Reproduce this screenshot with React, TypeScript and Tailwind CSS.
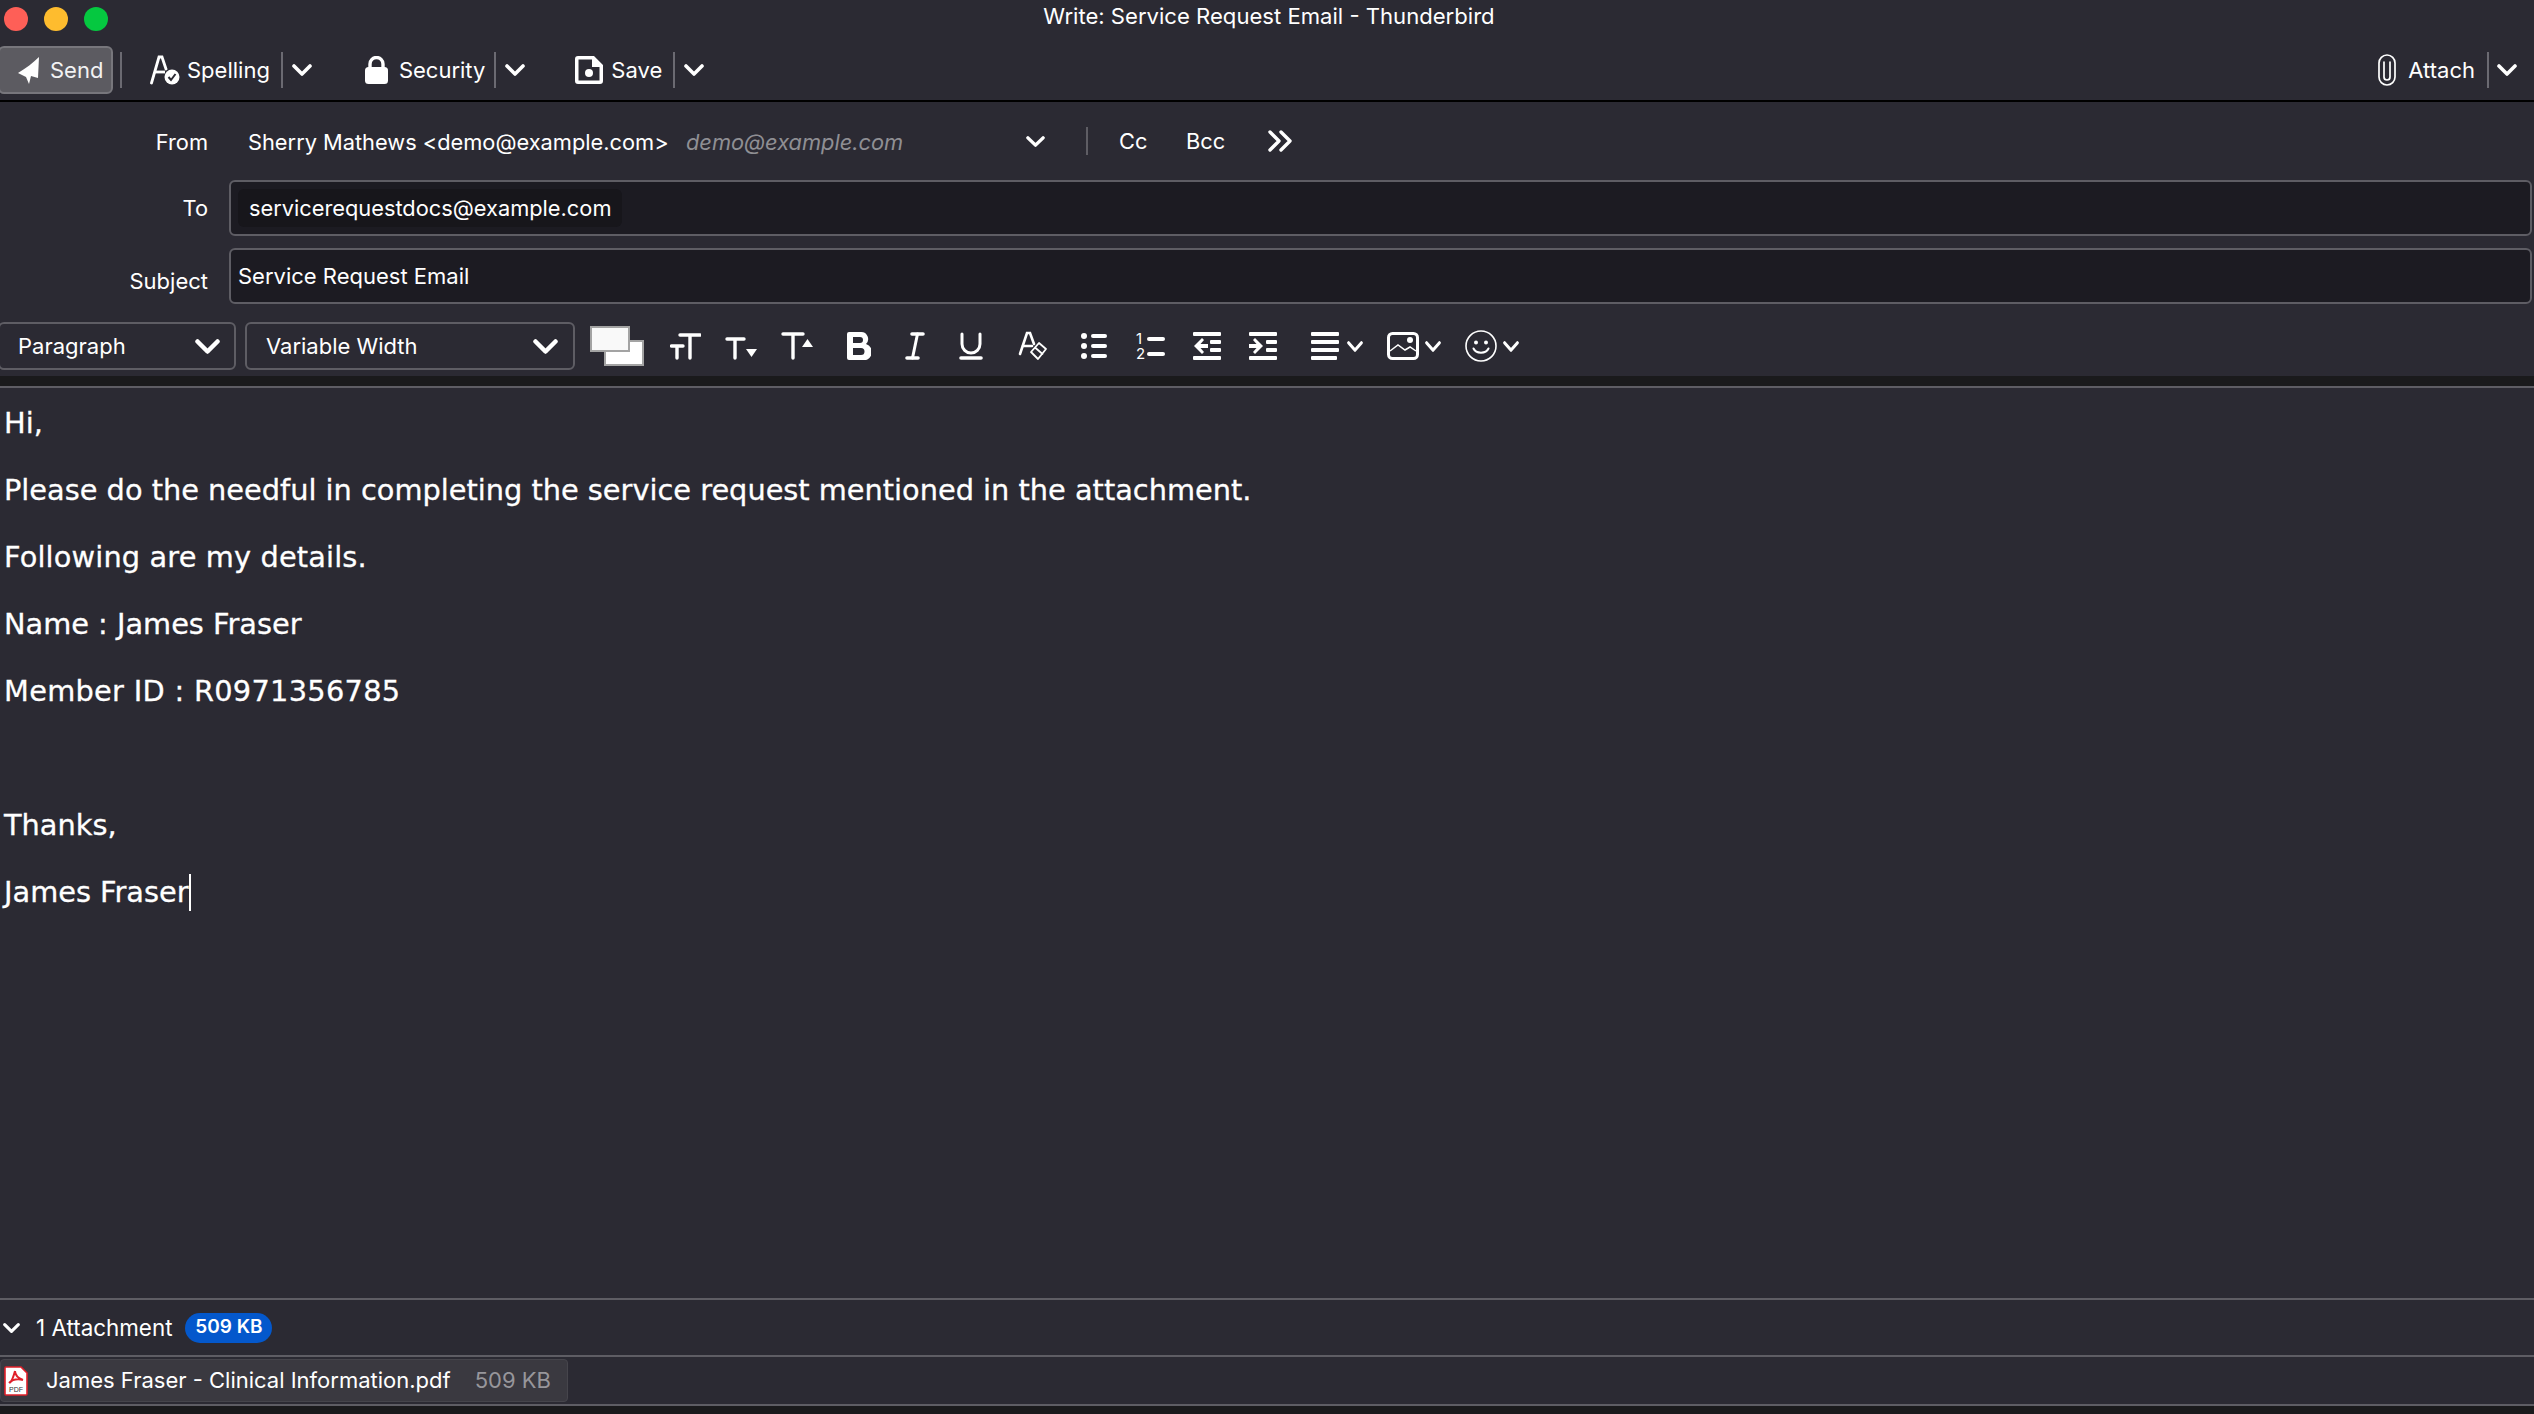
const ui = "font-['Inter','Liberation_Sans',sans-serif]";

function Chevron({ className = "w-[20px] h-[12px]" }: { className?: string }) {
  return (
    <svg viewBox="0 0 20 12" preserveAspectRatio="none" className={`${className} shrink-0`} fill="none" stroke="white" strokeWidth="3.6" strokeLinecap="round" strokeLinejoin="round">
      <path d="M2 2 L10 10 L18 2" />
    </svg>
  );
}

function Sep() {
  return <div className="w-[2px] h-9 bg-[#6b6a72] shrink-0" />;
}

function SendIcon() {
  return (
    <svg viewBox="0 0 22 27" className="w-[22px] h-[27px] shrink-0" fill="white">
      <path d="M21 0 L20 21 L13 19 L11 27 L8 20 L0 16 C8 11 15 6 21 0 Z" />
    </svg>
  );
}

function SpellIcon() {
  return (
    <svg viewBox="0 0 30 30" className="w-[30px] h-[30px] shrink-0" fill="none" stroke="white" strokeWidth="2.8">
      <path d="M1.5 28 L9 2 L12 2 L16 14" strokeLinecap="round" />
      <path d="M5 17 H15" />
      <circle cx="22" cy="22" r="7.5" fill="white" stroke="none" />
      <path d="M18.5 22 L21 25 L25.5 19" stroke="#2b2a33" strokeWidth="2" />
    </svg>
  );
}

function LockIcon() {
  return (
    <svg viewBox="0 0 23 28" className="w-[23px] h-[28px] shrink-0">
      <path d="M5 13 V8 a6.5 6.5 0 0 1 13 0 V13" fill="none" stroke="white" strokeWidth="3.4" />
      <rect x="0" y="11" width="23" height="17" rx="3.5" fill="white" />
    </svg>
  );
}

function SaveIcon() {
  return (
    <svg viewBox="0 0 28 28" className="w-[28px] h-[28px] shrink-0">
      <path fillRule="evenodd" fill="white" d="M3 0 H19 L28 9 V25 A3 3 0 0 1 25 28 H3 A3 3 0 0 1 0 25 V3 A3 3 0 0 1 3 0 Z M3.5 3.5 V24.5 H24.5 V11 H17 V3.5 Z" />
      <circle cx="14" cy="17" r="4" fill="white" />
    </svg>
  );
}

function ClipIcon() {
  return (
    <svg viewBox="0 0 18 32" className="w-[18px] h-[32px] shrink-0" fill="none" stroke="white" strokeWidth="1.7" strokeLinecap="round">
      <path d="M6 8 V23 a3 3 0 0 0 6 0 V8" />
      <rect x="1" y="1" width="16" height="30" rx="8" />
    </svg>
  );
}

function FontSmallerBig() {
  return (
    <svg viewBox="0 0 31 28" className="w-[31px] h-[28px] shrink-0" fill="none" stroke="white" strokeWidth="3.4" strokeLinecap="round">
      <path d="M10 3 H30 M20 3 V26 M1.5 14 H13 M7 14 V26" />
    </svg>
  );
}

function FontSmaller() {
  return (
    <svg viewBox="0 0 32 28" className="w-[32px] h-[28px] shrink-0" fill="none" stroke="white" strokeWidth="3.4" strokeLinecap="round">
      <path d="M2 7 H19 M10 7 V26" />
      <path d="M21 17 H32 L26.5 25 Z" fill="white" stroke="none" />
    </svg>
  );
}

function FontLarger() {
  return (
    <svg viewBox="0 0 32 28" className="w-[32px] h-[28px] shrink-0" fill="none" stroke="white" strokeWidth="3.4" strokeLinecap="round">
      <path d="M2 2 H22 M12 2 V26" />
      <path d="M21 15 H32 L26.5 7 Z" fill="white" stroke="none" />
    </svg>
  );
}

function BoldIcon() {
  return (
    <svg viewBox="0 0 24 28" className="w-[24px] h-[28px] shrink-0" fill="white">
      <path fillRule="evenodd" d="M0 2 a2 2 0 0 1 2 -2 H14 a7 7 0 0 1 5 12 a8 8 0 0 1 -5 16 H2 a2 2 0 0 1 -2 -2 Z M6 5 V11 H13 a3 3 0 0 0 0 -6 Z M6 16 V23 H14 a3.5 3.5 0 0 0 0 -7 Z" />
    </svg>
  );
}

function ItalicIcon() {
  return (
    <svg viewBox="0 0 20 28" className="w-[20px] h-[28px] shrink-0" fill="none" stroke="white" strokeLinecap="round">
      <path d="M7 2 H18 M2 26 H13" strokeWidth="3.6" />
      <path d="M12.5 2 L7.5 26" strokeWidth="3" />
    </svg>
  );
}

function UnderlineIcon() {
  return (
    <svg viewBox="0 0 24 28" className="w-[24px] h-[28px] shrink-0" fill="none" stroke="white" strokeLinecap="round">
      <path d="M3 2 V12 A9 9 0 0 0 21 12 V2" strokeWidth="3" />
      <path d="M2 26 H22" strokeWidth="3.6" />
    </svg>
  );
}

function RemoveStyle() {
  return (
    <svg viewBox="0 0 30 30" className="w-[30px] h-[30px] shrink-0" fill="none" stroke="white" strokeWidth="2.6" strokeLinecap="round">
      <path d="M2 23 L9 2 L12 2 L16 13" />
      <path d="M5 15 H14" />
      <path d="M13 21 L21 12 L28 18 L20 28 Z M17 16.5 L24.5 23" strokeLinejoin="round" strokeWidth="1.8" />
    </svg>
  );
}

function BulletList() {
  return (
    <svg viewBox="0 0 26 26" className="w-[26px] h-[26px] shrink-0" fill="white">
      <circle cx="3" cy="3" r="3" />
      <circle cx="3" cy="13" r="3" />
      <circle cx="3" cy="23" r="3" />
      <rect x="10" y="1" width="16" height="4" rx="2" />
      <rect x="10" y="11" width="16" height="4" rx="2" />
      <rect x="10" y="21" width="16" height="4" rx="2" />
    </svg>
  );
}

function NumberList() {
  return (
    <div className="w-[29px] h-[28px] shrink-0 flex flex-col gap-[1px] text-[15px] leading-[14px]">
      <div className="h-[14px] flex items-center justify-between">
        <span>1</span>
        <div className="w-[18px] h-[4px] rounded-full bg-white" />
      </div>
      <div className="h-[14px] flex items-center justify-between">
        <span>2</span>
        <div className="w-[18px] h-[4px] rounded-full bg-white" />
      </div>
    </div>
  );
}

function Outdent() {
  return (
    <svg viewBox="0 0 28 28" className="w-[28px] h-[28px] shrink-0" fill="white">
      <rect x="0" y="0" width="28" height="4" rx="1" />
      <rect x="17" y="8" width="11" height="4" rx="1" />
      <rect x="17" y="16" width="11" height="4" rx="1" />
      <rect x="0" y="24" width="28" height="4" rx="1" />
      <path d="M9 6 L1 14 L9 22 L11 20 L7.5 16 H15 V12 H7.5 L11 8 Z" />
    </svg>
  );
}

function Indent() {
  return (
    <svg viewBox="0 0 28 28" className="w-[28px] h-[28px] shrink-0" fill="white">
      <rect x="0" y="0" width="28" height="4" rx="1" />
      <rect x="17" y="8" width="11" height="4" rx="1" />
      <rect x="17" y="16" width="11" height="4" rx="1" />
      <rect x="0" y="24" width="28" height="4" rx="1" />
      <path d="M6 6 L14 14 L6 22 L4 20 L7.5 16 H0 V12 H7.5 L4 8 Z" />
    </svg>
  );
}

function AlignIcon() {
  return (
    <svg viewBox="0 0 28 28" className="w-[28px] h-[28px] shrink-0" fill="white">
      <rect x="0" y="0" width="28" height="4" rx="1" />
      <rect x="0" y="8" width="28" height="4" rx="1" />
      <rect x="0" y="16" width="28" height="4" rx="1" />
      <rect x="0" y="24" width="26" height="4" rx="1" />
    </svg>
  );
}

function ImageIcon() {
  return (
    <svg viewBox="0 0 32 28" className="w-[32px] h-[28px] shrink-0" fill="none" stroke="white">
      <rect x="1.5" y="1.5" width="29" height="25" rx="4" strokeWidth="3" />
      <path d="M3 19 L11 13 L18 18 L23 15 L29 19" strokeWidth="1.5" />
      <circle cx="23" cy="8" r="3" fill="white" stroke="none" />
    </svg>
  );
}

function SmileIcon() {
  return (
    <svg viewBox="0 0 32 32" className="w-[32px] h-[32px] shrink-0" fill="none" stroke="white" strokeWidth="1.6" strokeLinecap="round">
      <circle cx="16" cy="16" r="15" />
      <circle cx="11" cy="12.5" r="2" fill="white" stroke="none" />
      <circle cx="21" cy="12.5" r="2" fill="white" stroke="none" />
      <path d="M8.5 18.5 C11 24 21 24 23.5 18.5" strokeWidth="2" />
    </svg>
  );
}

function PdfIcon() {
  return (
    <svg viewBox="0 0 24 30" className="w-[24px] h-[30px] shrink-0">
      <path d="M2 1 H17 L23 7 V28 A1 1 0 0 1 22 29 H2 A1 1 0 0 1 1 28 V2 A1 1 0 0 1 2 1 Z" fill="white" stroke="#e0202a" strokeWidth="1.6" />
      <path d="M11 5 C10 9 9 13 6 17 M11 5 C11 9 14 12 19 14 M5 17 C9 13 15 13 19 14" fill="none" stroke="#e0202a" strokeWidth="2" />
      <text x="12" y="26" textAnchor="middle" fontSize="7" fill="#333" fontFamily="Liberation Sans">PDF</text>
    </svg>
  );
}

const bodyLines = [
  { text: "Hi,", className: "" },
  { text: "Please do the needful in completing the service request mentioned in the attachment.", className: "" },
  { text: "Following are my details.", className: "tracking-[0.15px]" },
  { text: "Name : James Fraser", className: "" },
  { text: "Member ID : R0971356785", className: "tracking-[0.3px]" },
  { text: "", className: "" },
  { text: "Thanks,", className: "" },
];

export default function App() {
  return (
    <div className={`w-[2534px] h-[1414px] overflow-hidden flex flex-col bg-[#2b2a33] text-white ${ui}`}>
      {/* Title bar */}
      <div className="relative h-[46px] shrink-0 flex justify-center">
        <div className="absolute left-[4px] top-[7px] flex gap-[16px]">
          <div className="w-6 h-6 rounded-full bg-[#fe5f57]" />
          <div className="w-6 h-6 rounded-full bg-[#febc2e]" />
          <div className="w-6 h-6 rounded-full bg-[#05c840]" />
        </div>
        <div className="text-[22.1px] leading-[32px] ml-[4px]">Write: Service Request Email - Thunderbird</div>
      </div>

      {/* Main toolbar */}
      <div className="h-[56px] shrink-0 flex items-start border-b-2 border-black text-[22px]">
        <div className="-ml-[2px] w-[115px] h-[48px] shrink-0 rounded-[6px] border-2 border-[#77767c] bg-[#5c5b61] flex items-center gap-[10px] pl-[18px] text-[#f2f2f3]">
          <SendIcon />
          <span>Send</span>
        </div>
        <div className="ml-[7px] mt-[6px]"><Sep /></div>
        <div className="ml-[28px] flex items-center h-[48px] gap-[7px]">
          <SpellIcon />
          <span>Spelling</span>
        </div>
        <div className="ml-[11px] mt-[6px]"><Sep /></div>
        <div className="ml-[9px] h-[48px] flex items-center"><Chevron /></div>
        <div className="ml-[53px] flex items-center h-[48px] gap-[11px]">
          <LockIcon />
          <span>Security</span>
        </div>
        <div className="ml-[9px] mt-[6px]"><Sep /></div>
        <div className="ml-[9px] h-[48px] flex items-center"><Chevron /></div>
        <div className="ml-[50px] flex items-center h-[48px] gap-[8px]">
          <SaveIcon />
          <span>Save</span>
        </div>
        <div className="ml-[11px] mt-[6px]"><Sep /></div>
        <div className="ml-[9px] h-[48px] flex items-center"><Chevron /></div>
        <div className="ml-auto flex items-center h-[48px] gap-[12px]">
          <ClipIcon />
          <span>Attach</span>
        </div>
        <div className="ml-[12px] mt-[6px]"><Sep /></div>
        <div className="ml-[8px] mr-[17px] h-[48px] flex items-center"><Chevron /></div>
      </div>

      {/* Address fields */}
      <div className="shrink-0 flex flex-col text-[22px] pr-[2px]">
        <div className="h-[78px] flex items-center pt-[2px] text-[21.8px]">
          <div className="w-[208px] text-right">From</div>
          <div className="ml-[40px] w-[420px] whitespace-nowrap">Sherry Mathews &lt;demo@example.com&gt;</div>
          <div className="ml-[18px] w-[340px] italic text-[#8f8f94]">demo@example.com</div>
          <Chevron className="w-[19px] h-[11px] -mt-[2px]" />
          <div className="ml-[41px] w-[2px] h-[28px] -mt-[2px] bg-[#5e5d64]" />
          <div className="ml-[31px] w-[67px] -mt-[2px]">Cc</div>
          <div className="w-[82px] -mt-[2px]">Bcc</div>
          <svg viewBox="0 0 24 22" className="w-[24px] h-[22px] -mt-[2px]" fill="none" stroke="white" strokeWidth="3.4" strokeLinecap="round" strokeLinejoin="round">
            <path d="M2 2 L11 11 L2 20 M13 2 L22 11 L13 20" />
          </svg>
        </div>
        <div className="h-[56px] flex items-center text-[21.8px]">
          <div className="w-[208px] text-right">To</div>
          <div className="ml-[21px] flex-1 h-[56px] rounded-[6px] border-2 border-[#5e5d64] bg-[#1c1b22] flex items-center pl-[7px]">
            <div className="h-[38px] rounded-[6px] bg-[#17161b] px-[11px] flex items-center">servicerequestdocs@example.com</div>
          </div>
        </div>
        <div className="mt-[12px] h-[56px] flex items-center">
          <div className="w-[208px] text-right pt-[10px]">Subject</div>
          <div className="ml-[21px] flex-1 h-[56px] rounded-[6px] border-2 border-[#5e5d64] bg-[#1c1b22] flex items-center pl-[7px]">
            Service Request Email
          </div>
        </div>
      </div>

      {/* Format bar */}
      <div className="h-[72px] shrink-0 flex items-center pt-[12px] text-[22px]">
        <div className="-ml-[2px] w-[238px] h-[48px] shrink-0 rounded-[6px] border-2 border-[#5e5d64] flex items-center justify-between pl-[18px] pr-[14px]">
          <span>Paragraph</span>
          <Chevron className="w-[25px] h-[15px]" />
        </div>
        <div className="ml-[9px] w-[330px] h-[48px] shrink-0 rounded-[6px] border-2 border-[#5e5d64] flex items-center justify-between pl-[19px] pr-[15px]">
          <span>Variable Width</span>
          <Chevron className="w-[25px] h-[15px]" />
        </div>
        <div className="relative ml-[15px] w-[54px] h-[40px] shrink-0">
          <div className="absolute left-[14px] top-[14px] w-[40px] h-[26px] bg-white border-2 border-[#a3a3a3]" />
          <div className="absolute left-0 top-0 w-[40px] h-[26px] bg-[#f9f9f9] border-2 border-[#a3a3a3]" />
        </div>
        <div className="ml-[26px] flex items-center gap-[24px]">
          <FontSmallerBig />
          <FontSmaller />
          <FontLarger />
        </div>
        <div className="ml-[34px] flex items-center gap-[34px]">
          <BoldIcon />
          <ItalicIcon />
          <UnderlineIcon />
        </div>
        <div className="ml-[35px]"><RemoveStyle /></div>
        <div className="ml-[33px] flex items-center gap-[29px]">
          <BulletList />
          <NumberList />
        </div>
        <div className="ml-[28px] flex items-center gap-[28px]">
          <Outdent />
          <Indent />
        </div>
        <div className="ml-[34px] flex items-center gap-[8px]">
          <AlignIcon />
          <Chevron className="w-[16px] h-[11px]" />
        </div>
        <div className="ml-[24px] flex items-center gap-[6px]">
          <ImageIcon />
          <Chevron className="w-[16px] h-[11px]" />
        </div>
        <div className="ml-[24px] flex items-center gap-[6px]">
          <SmileIcon />
          <Chevron className="w-[16px] h-[11px]" />
        </div>
      </div>
      <div className="h-[10px] shrink-0 bg-[#1a1a1c]" />
      <div className="h-[2px] shrink-0 bg-[#5e5d64]" />

      {/* Message body */}
      <div className="flex-1 pl-[4px] pt-[2px] font-['DejaVu_Sans',sans-serif] text-[28.8px] leading-[67px] whitespace-pre [-webkit-text-stroke:0.3px_white]">
        {bodyLines.map((line, i) => (
          <div key={i} className={`h-[67px] ${line.className}`}>{line.text}</div>
        ))}
        <div className="h-[67px] flex items-center">
          <span>James Fraser</span>
          <div className="w-[2px] h-[37px] bg-white" />
        </div>
      </div>

      {/* Attachments */}
      <div className="h-[2px] shrink-0 bg-[#5e5d64]" />
      <div className="h-[55px] shrink-0 flex items-center text-[22.4px]">
        <Chevron className="ml-[3px] w-[17px] h-[10px]" />
        <span className="ml-[16px]">1 Attachment</span>
        <span className="ml-[13px] h-[30px] w-[87px] justify-center rounded-full bg-[#0458cc] flex items-center text-[19px] font-semibold">509 KB</span>
      </div>
      <div className="h-[2px] shrink-0 bg-[#5e5d64]" />
      <div className="h-[47px] shrink-0 flex items-center">
        <div className="w-[568px] h-[43px] rounded-[4px] bg-[#3a3940] border border-[#46454c] flex items-center pl-[3px] text-[22px]">
          <PdfIcon />
          <span className="ml-[18px] whitespace-nowrap">James Fraser - Clinical Information.pdf</span>
          <span className="ml-[24px] text-[#97969b]">509 KB</span>
        </div>
      </div>
      <div className="h-[2px] shrink-0 bg-[#5e5d64]" />
      <div className="h-[8px] shrink-0 bg-[#1a1a1c]" />
    </div>
  );
}
